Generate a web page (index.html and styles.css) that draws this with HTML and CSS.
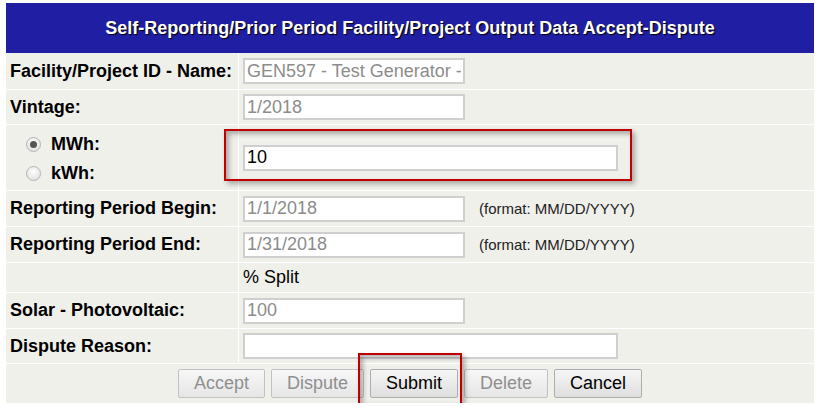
FILE: index.html
```html
<!DOCTYPE html>
<html lang="en">
<head>
    <meta charset="UTF-8">
    <title>Self-Reporting/Prior Period Facility/Project Output Data Accept-Dispute</title>
    <link rel="stylesheet" href="styles.css">
</head>
<body>

    <table class="form">
        <colgroup>
            <col class="col-label">
            <col>
        </colgroup>
        <tr>
            <th colspan="2" class="title">Self-Reporting/Prior Period Facility/Project Output Data Accept-Dispute</th>
        </tr>
        <tr class="r1">
            <td class="label">Facility/Project ID - Name:</td>
            <td class="value"><input class="field short" type="text" value="GEN597 - Test Generator - Solar" readonly></td>
        </tr>
        <tr class="r2">
            <td class="label">Vintage:</td>
            <td class="value"><input class="field short" type="text" value="1/2018" readonly></td>
        </tr>
        <tr class="r3">
            <td class="label">
                <label class="unit"><span class="radio checked"></span>MWh:</label>
                <label class="unit"><span class="radio"></span>kWh:</label>
            </td>
            <td class="value">
                <!-- highlighted field -->
                <span class="mark"><input class="field long live" type="text" value="10"><span class="callout field-callout"></span></span>
            </td>
        </tr>
        <tr class="r4">
            <td class="label">Reporting Period Begin:</td>
            <td class="value"><input class="field short" type="text" value="1/1/2018" readonly><span class="hint">(format: MM/DD/YYYY)</span></td>
        </tr>
        <tr class="r5">
            <td class="label">Reporting Period End:</td>
            <td class="value"><input class="field short" type="text" value="1/31/2018" readonly><span class="hint">(format: MM/DD/YYYY)</span></td>
        </tr>
        <tr class="r6">
            <td class="label"></td>
            <td class="value split">% Split</td>
        </tr>
        <tr class="r7">
            <td class="label">Solar - Photovoltaic:</td>
            <td class="value"><input class="field short" type="text" value="100" readonly></td>
        </tr>
        <tr class="r8">
            <td class="label">Dispute Reason:</td>
            <td class="value"><input class="field long live" type="text" value=""></td>
        </tr>
        <tr class="r9">
            <td colspan="2" class="actions">
                <div class="buttons">
                    <button class="btn" disabled>Accept</button>
                    <button class="btn" disabled>Dispute</button>
                    <span class="mark"><button class="btn">Submit</button><span class="callout btn-callout"></span></span>
                    <button class="btn" disabled>Delete</button>
                    <button class="btn">Cancel</button>
                </div>
            </td>
        </tr>
    </table>

</body>
</html>
```

FILE: styles.css
```css
body {
    margin: 0;
    font-family: "Liberation Sans", Arial, sans-serif;
    font-size: 18px;
    color: #000;
    background: #fff;
}
.form {
    margin: 3px 0 0 6px;
    width: 808px;
    border-collapse: separate;
    border-spacing: 0;
    table-layout: fixed;
}
.col-label {
    width: 233px;
}
.form td {
    box-sizing: border-box;
    padding: 0;
    background: #f0f0eb;
    border-bottom: 1px solid #fff;
    vertical-align: middle;
}
.title {
    height: 48px;
    background: #201ea2;
    color: #fff;
    font-size: 18px;
    font-weight: bold;
    text-align: center;
    text-shadow: 1px 1px 1px #000;
}
.form .label {
    padding-left: 4px;
    border-right: 1px solid #fff;
    font-weight: bold;
    white-space: nowrap;
}
.form .value {
    padding-left: 4px;
    white-space: nowrap;
}
.r1 td { height: 37px; }
.r2 td { height: 35px; }
.r3 td { height: 66px; }
.r4 td, .r5 td, .r7 td { height: 36px; }
.r6 td { height: 30px; }
.r8 td { height: 35px; }
.form .r9 td { height: 39px; border-bottom: none; }

.field {
    box-sizing: border-box;
    height: 26px;
    margin: 0;
    padding: 0 2px;
    border: 2px solid #cfcfcf;
    background: #fff;
    font-family: inherit;
    font-size: 18px;
    color: #8c8c8c;
    vertical-align: middle;
    outline: none;
}
.field.live {
    color: #000;
}
.short { width: 222px; }
.long { width: 375px; }
.hint {
    margin-left: 14px;
    font-size: 15px;
    color: #222;
    vertical-align: middle;
}

.unit {
    display: flex;
    align-items: center;
    height: 29px;
    padding-left: 16px;
}
.r3 .label {
    padding-top: 3px;
}
.radio {
    box-sizing: border-box;
    width: 15px;
    height: 15px;
    margin-right: 10px;
    border: 1px solid #b4b4b4;
    border-radius: 50%;
    background: radial-gradient(circle at 50% 35%, #fdfdfd, #dcdcdc);
    display: flex;
    align-items: center;
    justify-content: center;
}
.radio.checked::after {
    content: "";
    width: 7px;
    height: 7px;
    border-radius: 50%;
    background: #555;
}

.mark {
    position: relative;
    display: inline-block;
    vertical-align: middle;
}
.mark .field, .mark .btn {
    display: block;
}
.callout {
    position: absolute;
    border: 2px solid #c00000;
    box-shadow: 3px 3px 5px rgba(0, 0, 0, 0.3), inset 3px 3px 5px rgba(0, 0, 0, 0.3);
    pointer-events: none;
}
.field-callout {
    left: -19px;
    right: -14px;
    top: -16px;
    bottom: -10px;
}
.btn-callout {
    left: -12px;
    right: -4px;
    top: -16px;
    bottom: -7px;
}

.actions {
    text-align: center;
}
.buttons {
    display: flex;
    justify-content: center;
    align-items: center;
    gap: 6px;
}
.btn {
    box-sizing: border-box;
    height: 29px;
    margin: 0;
    padding: 0 15px;
    border: 1px solid #adadad;
    border-radius: 2px;
    background: linear-gradient(#f6f6f6, #dedede);
    font-family: inherit;
    font-size: 18px;
    color: #000;
}
.btn:disabled {
    color: #8f8f8f;
    border-color: #c2c2c2;
    background: linear-gradient(#f7f7f7, #e6e6e6);
}
```
